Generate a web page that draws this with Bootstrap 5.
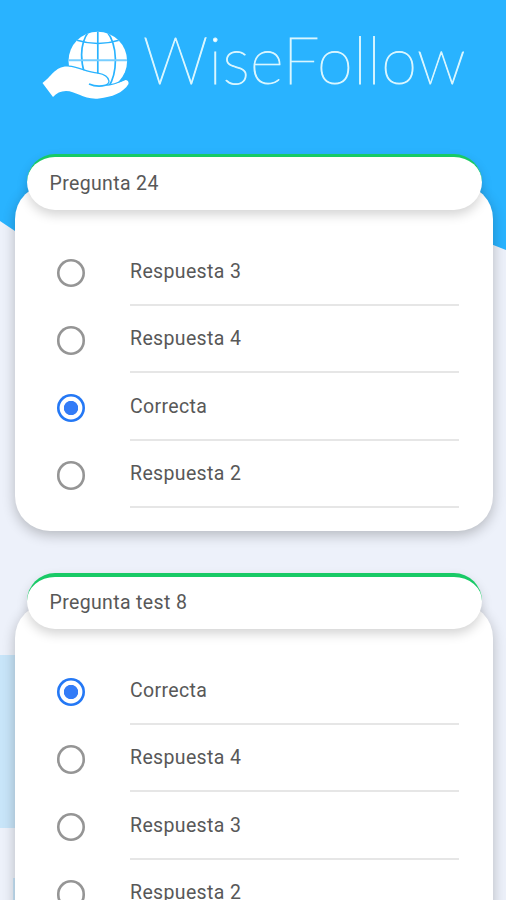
<!DOCTYPE html>
<html lang="es">
<head>
<meta charset="utf-8">
<meta name="viewport" content="width=device-width, initial-scale=1">
<title>WiseFollow</title>
<link href="https://cdn.jsdelivr.net/npm/bootstrap@5.3.0/dist/css/bootstrap.min.css" rel="stylesheet">
<style>
html,body{height:900px;overflow:hidden}
body{background:#edf1fa;font-family:Roboto,"Noto Sans",sans-serif;color:#585858}
.screen{height:900px}
.backdrop{z-index:0}
.brand-bar{height:154px;padding:30px 0 0 42px}
.brand-text{font-family:Lato,sans-serif;font-weight:100;font-size:65px;line-height:59px;color:#fff;letter-spacing:.4px;-webkit-text-stroke:1px #d9f6ff;margin-left:13px;white-space:nowrap}
.question{padding:0 13.5px 0 14.5px;margin-bottom:42.5px}
.question-title{height:56px;margin:0 10.5px 0 12.5px;padding:1px 22.5px 0;border-radius:28px;border-top:3px solid #18ca66;box-shadow:0 5px 11px rgba(0,0,0,.17);font-size:19.5px;letter-spacing:.36px;z-index:1}
.question + .question .question-title{border-top-width:4px;padding-top:0}
.answers{margin-top:-26px;height:346.5px;border-radius:35px;padding:54px 33.5px 0 42px;box-shadow:0 4px 13px rgba(0,0,0,.24)}
.answer{height:67.5px}
.form-check-input.choice{width:28.5px;height:28.5px;margin:2px 45px 0 0;border:0;box-shadow:inset 0 0 0 2.6px #959595;background-image:none;background-color:#fff}
.form-check-input.choice:checked{box-shadow:inset 0 0 0 2.6px #2478f5;background:radial-gradient(circle,#347cf7 0 6.8px,#fff 7.5px)}
.answer-label{border-bottom:2px solid #e6e6e6;font-size:19.5px;letter-spacing:.36px;padding-top:1px}
</style>
<script src="https://cdn.jsdelivr.net/npm/bootstrap@5.3.0/dist/js/bootstrap.bundle.min.js"></script>
</head>
<body>
<div class="screen position-relative overflow-hidden">
<svg class="backdrop position-absolute top-0 start-0" width="506" height="900" viewBox="0 0 506 900" aria-hidden="true">
<path d="M0 0H506V250Q496 246 488 243Q370 190 260 245Q110 300 15 231L0 221Z" fill="#29b3ff"/>
<path d="M0 655H40V828H0Z" fill="#c8e5f9"/><path d="M13 878H40V900H13Z" fill="#c8e5f9"/>
</svg>
<div class="position-relative">
<header class="brand-bar d-flex align-items-start">
<svg width="88" height="70" viewBox="42 30 88 70" aria-hidden="true">
<clipPath id="globe"><circle cx="97.8" cy="61" r="29.3"/></clipPath>
<g clip-path="url(#globe)">
<path d="M66 30H130V95H66Z" fill="#fff"/>
<path d="M97.800 30V80M76 40Q87 43.500 98 43.500Q109 43.500 120 40M89 31C80 43 80 58 84.500 74M106.500 31C118 45 118 72 108.500 87" fill="none" stroke="#29b3ff" stroke-width="1.7"/>
<path d="M66 60.300H130" fill="none" stroke="#78ceff" stroke-width="1.9"/>
</g>
<path d="M42.500 83C51 77 55 66.500 67 66.500C77 66.500 85 72 98 73.500Q107.500 75 108.500 81Q109 84 105 85.500Q114 85 125 80Q129 80 128.500 84C123 93 112 97 99 98.500C84 100 76 91 66 91Q58 91 53 97Z" fill="#fff"/>
<path d="M69 66.200C79 67 86 72 98 73.200Q108 75 109 81Q109 84 105 85.300Q114 85 125 79.500" fill="none" stroke="#29b3ff" stroke-width="1.3"/>
<path d="M89 84Q97 87.500 105.500 85.300" fill="none" stroke="#29b3ff" stroke-width="1.700"/>
</svg>
<div class="brand-text">WiseFollow</div>
</header>
<main>
<section class="question">
<div class="question-title bg-white position-relative d-flex align-items-center">Pregunta 24</div>
<div class="answers bg-white">
<label class="answer d-flex align-items-center"><input class="form-check-input choice flex-shrink-0" type="radio" name="q24"><span class="answer-label flex-grow-1 h-100 d-flex align-items-center">Respuesta 3</span></label>
<label class="answer d-flex align-items-center"><input class="form-check-input choice flex-shrink-0" type="radio" name="q24"><span class="answer-label flex-grow-1 h-100 d-flex align-items-center">Respuesta 4</span></label>
<label class="answer d-flex align-items-center"><input class="form-check-input choice flex-shrink-0" type="radio" name="q24" checked><span class="answer-label flex-grow-1 h-100 d-flex align-items-center">Correcta</span></label>
<label class="answer d-flex align-items-center"><input class="form-check-input choice flex-shrink-0" type="radio" name="q24"><span class="answer-label flex-grow-1 h-100 d-flex align-items-center">Respuesta 2</span></label>
</div>
</section>
<section class="question">
<div class="question-title bg-white position-relative d-flex align-items-center">Pregunta test 8</div>
<div class="answers bg-white">
<label class="answer d-flex align-items-center"><input class="form-check-input choice flex-shrink-0" type="radio" name="q8" checked><span class="answer-label flex-grow-1 h-100 d-flex align-items-center">Correcta</span></label>
<label class="answer d-flex align-items-center"><input class="form-check-input choice flex-shrink-0" type="radio" name="q8"><span class="answer-label flex-grow-1 h-100 d-flex align-items-center">Respuesta 4</span></label>
<label class="answer d-flex align-items-center"><input class="form-check-input choice flex-shrink-0" type="radio" name="q8"><span class="answer-label flex-grow-1 h-100 d-flex align-items-center">Respuesta 3</span></label>
<label class="answer d-flex align-items-center"><input class="form-check-input choice flex-shrink-0" type="radio" name="q8"><span class="answer-label flex-grow-1 h-100 d-flex align-items-center">Respuesta 2</span></label>
</div>
</section>
</main>
</div>
</div>
</body>
</html>
